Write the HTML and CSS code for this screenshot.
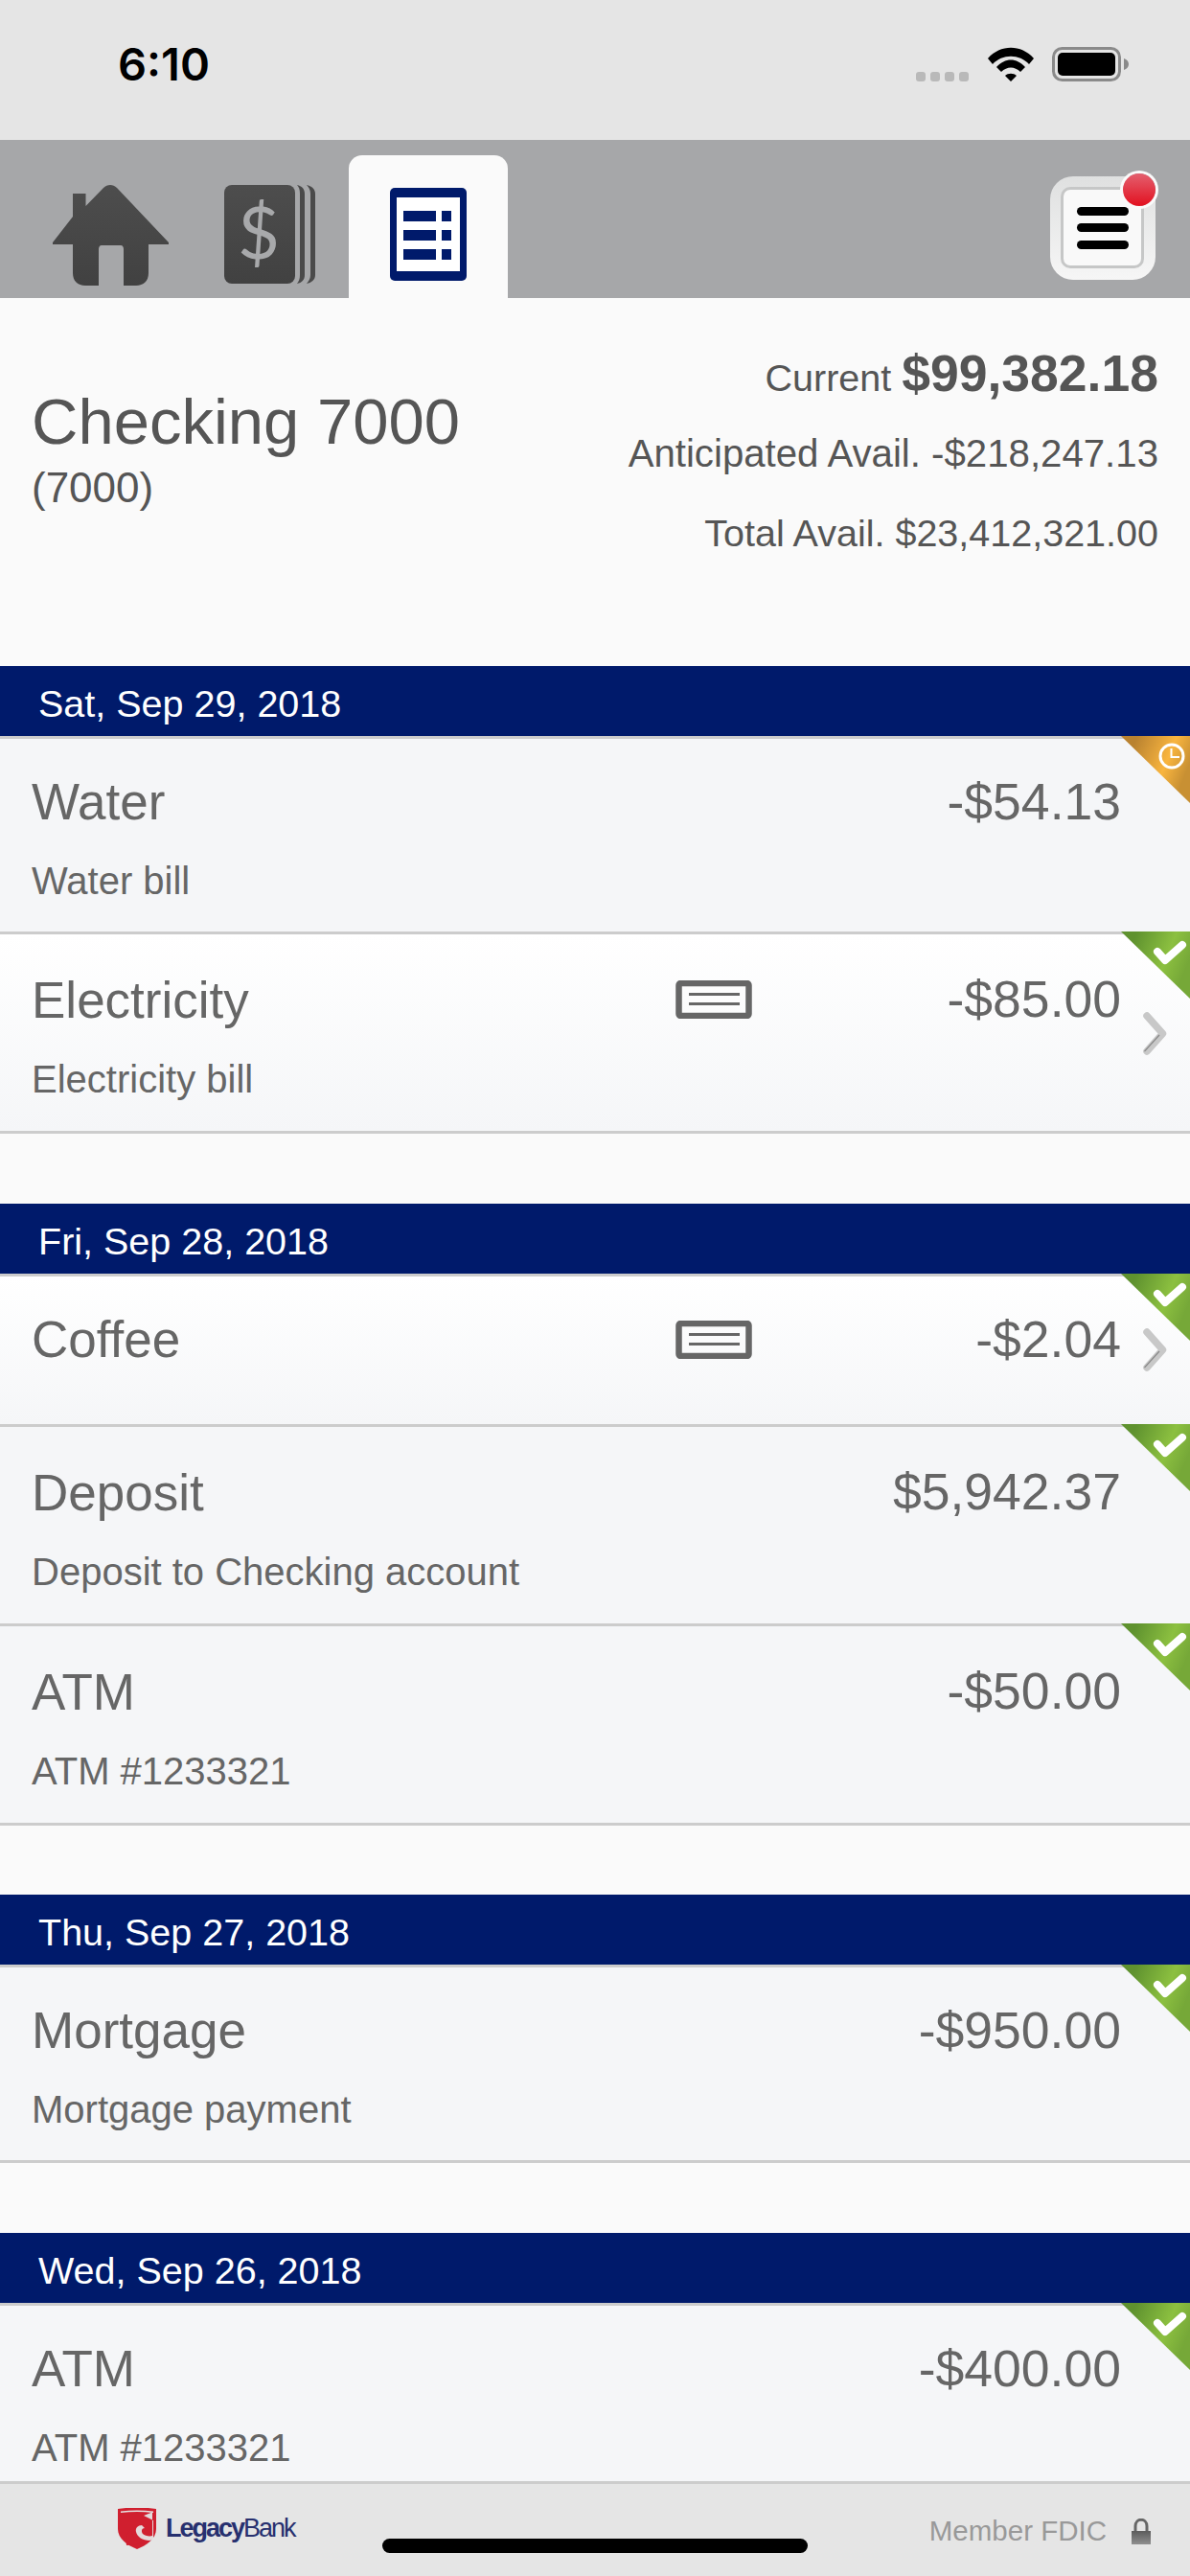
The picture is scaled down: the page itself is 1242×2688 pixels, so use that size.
FILE: index.html
```html
<!DOCTYPE html>
<html lang="en">
<head>
<meta charset="utf-8">
<title>Checking 7000</title>
<link rel="stylesheet" href="styles.css">
</head>
<body>
<div class="app">
  <svg width="0" height="0" class="defs">
    <defs>
      <linearGradient id="gDark" x1="0" y1="0" x2="0" y2="1"><stop offset="0" stop-color="#4d4d4d"/><stop offset="1" stop-color="#414141"/></linearGradient>
      <linearGradient id="gGreen" x1="0" y1="0" x2="1" y2="0.4"><stop offset="0.2" stop-color="#5f922f"/><stop offset="0.7" stop-color="#8cc040"/><stop offset="1" stop-color="#76a838"/></linearGradient>
      <linearGradient id="gOrange" x1="0" y1="0" x2="1" y2="0.4"><stop offset="0.2" stop-color="#b98230"/><stop offset="0.7" stop-color="#f9b53f"/><stop offset="1" stop-color="#c89033"/></linearGradient>
      <linearGradient id="gLock" x1="0" y1="0" x2="0" y2="1"><stop offset="0" stop-color="#5c5c5c"/><stop offset="1" stop-color="#8f8f8f"/></linearGradient>
      <symbol id="tick" viewBox="0 0 72 70">
        <path d="M0 0H72V70Z" fill="url(#gGreen)"/>
        <path d="M38 21L46 30L64 14" fill="none" stroke="#fff" stroke-width="8" stroke-linecap="round" stroke-linejoin="round"/>
      </symbol>
      <symbol id="clock" viewBox="0 0 72 70">
        <path d="M0 0H72V70Z" fill="url(#gOrange)"/>
        <circle cx="53" cy="21" r="12" fill="none" stroke="#fff" stroke-width="3"/>
        <path d="M52.500 13V22H61" fill="none" stroke="#fff" stroke-width="2"/>
      </symbol>
      <symbol id="receipt" viewBox="0 0 80 40">
        <rect x="3.500" y="3" width="73" height="34" rx="2" fill="none" stroke="#666" stroke-width="6.500"/>
        <path d="M14 14.500H67M14 24.500H67" stroke="#666" stroke-width="3"/>
      </symbol>
      <symbol id="chev" viewBox="0 0 25 45">
        <path d="M4 4L20.500 22.500L4 41" fill="none" stroke="#c8c8c8" stroke-width="7.500" stroke-linecap="round" stroke-linejoin="round"/>
        <path d="M1.500 41L17 24" fill="none" stroke="#8a8a8a" stroke-width="1.200"/>
      </symbol>
    </defs>
  </svg>

  <header class="status">
    <span class="time">6:10</span>
    <div class="status-icons">
      <svg class="signal" width="55" height="10" viewBox="0 0 55 10"><g fill="#b9b9b9"><rect width="10" height="10" rx="3"/><rect x="15" width="10" height="10" rx="3"/><rect x="30" width="10" height="10" rx="3"/><rect x="45" width="10" height="10" rx="3"/></g></svg>
      <svg class="wifi" width="48" height="36" viewBox="0 0 48 36"><path d="M0 12C13 -3 35 -3 48 12L43 18C33 7 15 7 5 18Z M9 21C18 11 30 11 39 21L34 26C28 20 20 20 14 26Z M18 30C21 27 27 27 30 30L24 36Z" fill="#000"/></svg>
      <svg class="battery" width="80" height="36" viewBox="0 0 80 36"><rect x="1.500" y="1.500" width="69" height="33" rx="9" fill="none" stroke="#8a8a8a" stroke-width="3"/><rect x="6" y="6" width="60" height="24" rx="5" fill="#000"/><path d="M75 12C78 13 80 15 80 18C80 21 78 23 75 24Z" fill="#8a8a8a"/></svg>
    </div>
  </header>

  <nav class="nav">
    <svg class="home" width="121" height="105" viewBox="0 0 121 105"><path d="M21 9H34.500V22L53 3C57 -1 63 -1 67 3L121 60V62H100V92C100 100 95 105 87 105H74V67C74 65 73 63 71 63H51C49 63 48 65 48 67V105H34C26 105 21 100 21 92V62H0V60L21 33Z" fill="url(#gDark)"/></svg>
    <svg class="stack" width="95" height="103" viewBox="0 0 95 103"><path d="M76 0C81 1 84 4 84 9V94C84 99 81 102 76 103C78 100 79 98 79 94V9C79 5 78 2 76 0Z M86 0C91 1 95 4 95 9V94C95 99 91 102 86 103C88 100 90 98 90 94V9C90 5 88 2 86 0Z" fill="#4a4a4a"/><rect width="74" height="103" rx="8" fill="url(#gDark)"/><text x="36" y="77" text-anchor="middle" class="dollar">$</text></svg>
    <div class="tab">
      <svg width="80" height="97" viewBox="0 0 80 97"><rect width="80" height="97" rx="5" fill="#001a6b"/><rect x="7" y="10" width="66" height="77" fill="#fff"/><g fill="#001a6b"><rect x="14" y="24" width="34" height="11"/><rect x="54" y="24" width="10" height="11"/><rect x="14" y="44" width="34" height="11"/><rect x="54" y="44" width="10" height="11"/><rect x="14" y="64" width="34" height="11"/><rect x="54" y="64" width="10" height="11"/></g></svg>
    </div>
    <div class="menu">
      <span class="menu-inner">
        <i class="bar"></i><i class="bar"></i><i class="bar"></i>
      </span>
      <span class="dot"></span>
    </div>
  </nav>

  <main class="content">
    <section class="summary">
      <div class="acct">
        <div class="acct-name">Checking 7000</div>
        <div class="acct-num">(7000)</div>
      </div>
      <div class="bal">
        <div class="bal-cur">Current <b>$99,382.18</b></div>
        <div class="bal-line bal-wide">Anticipated Avail. -$218,247.13</div>
        <div class="bal-line">Total Avail. $23,412,321.00</div>
      </div>
    </section>

    <section class="day">
      <h2 class="date">Sat, Sep 29, 2018</h2>
      <div class="row">
        <svg class="corner"><use href="#clock"/></svg>
        <div class="row-top"><span class="name">Water</span><span class="amt">-$54.13</span></div>
        <div class="sub">Water bill</div>
      </div>
      <div class="row row-tall row-link">
        <svg class="corner"><use href="#tick"/></svg>
        <svg class="chev"><use href="#chev"/></svg>
        <div class="row-top"><span class="name">Electricity</span><svg class="rcpt"><use href="#receipt"/></svg><span class="amt">-$85.00</span></div>
        <div class="sub">Electricity bill</div>
      </div>
    </section>

    <section class="day">
      <h2 class="date">Fri, Sep 28, 2018</h2>
      <div class="row row-link row-short">
        <svg class="corner"><use href="#tick"/></svg>
        <svg class="chev"><use href="#chev"/></svg>
        <div class="row-top"><span class="name">Coffee</span><svg class="rcpt"><use href="#receipt"/></svg><span class="amt">-$2.04</span></div>
      </div>
      <div class="row row-tall">
        <svg class="corner"><use href="#tick"/></svg>
        <div class="row-top"><span class="name">Deposit</span><span class="amt">$5,942.37</span></div>
        <div class="sub">Deposit to Checking account</div>
      </div>
      <div class="row row-tall">
        <svg class="corner"><use href="#tick"/></svg>
        <div class="row-top"><span class="name">ATM</span><span class="amt">-$50.00</span></div>
        <div class="sub">ATM #1233321</div>
      </div>
    </section>

    <section class="day">
      <h2 class="date">Thu, Sep 27, 2018</h2>
      <div class="row">
        <svg class="corner"><use href="#tick"/></svg>
        <div class="row-top"><span class="name">Mortgage</span><span class="amt">-$950.00</span></div>
        <div class="sub">Mortgage payment</div>
      </div>
    </section>

    <section class="day day-last">
      <h2 class="date">Wed, Sep 26, 2018</h2>
      <div class="row row-end">
        <svg class="corner"><use href="#tick"/></svg>
        <div class="row-top"><span class="name">ATM</span><span class="amt">-$400.00</span></div>
        <div class="sub">ATM #1233321</div>
      </div>
    </section>
  </main>

  <footer class="foot">
    <div class="logo">
      <svg width="40" height="43" viewBox="0 0 40 43"><path d="M0 1C13 -1 27 -1 40 1V22C40 32 30 39 20 43C10 39 0 32 0 22Z" fill="#d01f2f"/><path d="M3 3.500C14 2 26 2 37 3.500V5C26 3.500 14 3.500 3 5Z" fill="#e5e5e5"/><path d="M27 8L37 13V33L33 34C26 34 20 30 19 25C18 21 21 18 25 18L28 21C25 21 24 24 26 27C28 29 33 30 36 29V5L37 4" fill="#e5e5e5" opacity="0.95"/><path d="M9 39C8 32 10 26 13 22L16 30C18 35 22 37 28 37Z" fill="#d01f2f"/></svg>
      <span class="logo-text"><b>Legacy</b>Bank</span>
    </div>
    <div class="fdic">
      <span>Member FDIC</span>
      <svg width="20" height="27" viewBox="0 0 20 27"><path d="M4 13V8C4 -1 16 -1 16 8V13" fill="none" stroke="#666" stroke-width="3"/><rect y="13" width="20" height="14" fill="url(#gLock)"/></svg>
    </div>
    <span class="indicator"></span>
  </footer>
</div>
</body>
</html>
```

FILE: styles.css
```css
* { box-sizing: border-box; }
html, body { margin: 0; padding: 0; }
body { width: 1242px; height: 2688px; overflow: hidden; font-family: "Liberation Sans", Arial, sans-serif; background: #fafafa; }
.app { width: 1242px; height: 2688px; display: flex; flex-direction: column; }
.defs { position: absolute; }

.status { height: 146px; flex: none; background: #e5e5e5; display: flex; justify-content: space-between; padding: 49px 64px 0 123px; }
.time { font-family: Inter, "Liberation Sans", sans-serif; font-weight: 600; font-size: 47px; line-height: 36px; color: #000; }
.status-icons { display: flex; align-items: flex-start; height: 36px; }
.signal { margin-top: 26px; margin-right: 20px; }
.wifi { margin-right: 19px; }

.nav { height: 165px; flex: none; background: #a6a7a9; display: flex; align-items: flex-start; padding-left: 55px; }
.home { flex: none; margin-top: 47px; margin-right: 58px; }
.stack { flex: none; margin-top: 47px; margin-right: 35px; }
.dollar { font-family: Lato, "Liberation Sans", sans-serif; font-size: 76px; fill: #a8a9ab; }
.tab { flex: none; width: 166px; height: 149px; margin-top: 16px; background: #fafafa; border-radius: 14px 14px 0 0; padding: 34px 0 0 43px; }
.menu { margin-left: auto; margin-right: 36px; margin-top: 38px; width: 110px; height: 108px; border-radius: 24px; background: linear-gradient(#dfe0e0, #f6f6f6); position: relative; padding: 11px; }
.menu-inner { display: flex; flex-direction: column; align-items: center; justify-content: center; gap: 8.500px; width: 87px; height: 85px; background: #f9f9f9; border: 3px solid #c6c7c7; border-radius: 10px; }
.bar { display: block; width: 54px; height: 9px; border-radius: 5px; background: #000; }
.dot { position: absolute; top: -3px; right: 0; width: 34px; height: 34px; border-radius: 50%; background: linear-gradient(#e4606f, #e2101f); box-shadow: 0 0 0 3px #fafafa; }

.content { flex: 1; min-height: 0; overflow: hidden; display: flex; flex-direction: column; background: #fafafa; }
.summary { height: 384px; flex: none; display: flex; justify-content: space-between; padding: 0 33px; }
.acct { padding-top: 91px; color: #555; }
.acct-name { font-size: 67px; line-height: 76px; }
.acct-num { font-size: 44px; line-height: 50px; margin-top: 6px; }
.bal { padding-top: 49px; text-align: right; color: #555; font-size: 39.500px; }
.bal-cur { line-height: 60px; }
.bal-cur b { font-size: 53.500px; }
.bal-line { line-height: 46px; margin-top: 36px; }
.bal-cur + .bal-line { margin-top: 27px; }
.bal-wide { font-size: 40.200px; }

.day { margin-bottom: 72.500px; flex: none; }
.day-last { margin-bottom: 0; }
.date { margin: 0; height: 73px; background: #001a6b; color: #fff; font-size: 39.500px; font-weight: 400; line-height: 78px; padding-left: 40px; overflow: hidden; }
.row { position: relative; height: 204px; border-top: 3px solid #ccc; background: #f5f6f8; padding: 35px 72px 0 33px; color: #666; }
.row-tall { height: 208px; padding-top: 38px; }
.row-short { height: 157px; }
.row:last-child { height: 207px; border-bottom: 3px solid #ccc; }
.row-tall:last-child { height: 211px; }
.row.row-end { height: 189px; }
.row-link { background: linear-gradient(#fff, #f5f6f8); }
.row-top { display: grid; grid-template-columns: 672px 80px 1fr; align-items: start; height: 62px; }
.name { font-size: 53px; line-height: 62px; grid-column: 1; }
.amt { font-size: 53.500px; line-height: 60px; grid-column: 3; justify-self: end; margin-top: 1px; }
.row-tall .amt { margin-top: 0; }
.rcpt { grid-column: 2; width: 80px; height: 40px; margin-top: 10px; }
.row-short .rcpt { margin-top: 11px; }
.sub { font-size: 40px; line-height: 46px; margin-top: 28px; }
.corner { position: absolute; right: 0; top: -3px; width: 72px; height: 70px; }
.chev { position: absolute; right: 24px; top: 81px; width: 25px; height: 45px; }
.row-short .chev { top: 54px; }

.foot { height: 96px; flex: none; background: #e5e5e5; position: relative; display: flex; justify-content: space-between; align-items: flex-start; padding: 25px 41px 0 123px; }
.logo { display: flex; align-items: center; gap: 10px; }
.logo-text { font-size: 27px; letter-spacing: -2px; color: #27306f; }
.fdic { display: flex; align-items: center; gap: 26px; font-size: 29.500px; color: #999; padding-top: 7px; }
.indicator { position: absolute; left: 399px; top: 57px; width: 444px; height: 15px; border-radius: 8px; background: #000; }
```
